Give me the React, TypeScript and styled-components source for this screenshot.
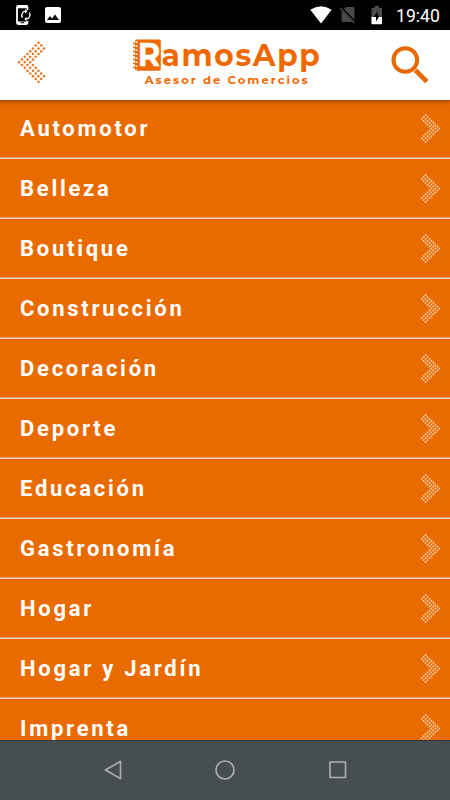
import React from 'react';
import styled, { createGlobalStyle } from 'styled-components';

const GlobalStyle = createGlobalStyle`
  body { margin: 0; background: #e96b00; }
  * { box-sizing: border-box; }
`;

const Screen = styled.div`
  width: 450px;
  height: 800px;
  display: flex;
  flex-direction: column;
  overflow: hidden;
  font-family: Roboto, sans-serif;
`;

const StatusBar = styled.div`
  height: 30px;
  flex: none;
  display: flex;
  align-items: center;
  justify-content: space-between;
  padding: 0 10px 0 15px;
  background: #000;
  color: #fff;
`;

const StatusGroup = styled.div`
  display: flex;
  align-items: center;
  height: 30px;
`;

const Icon = styled.svg<{ $gap?: number }>`
  display: block;
  flex: none;
  margin-left: ${({ $gap = 0 }) => $gap}px;
`;

const Clock = styled.span`
  margin-left: 13px;
  width: 44px;
  white-space: nowrap;
  font-size: 17.6px;
  line-height: 30px;
  padding-top: 2px;
`;

const Header = styled.header`
  height: 70px;
  flex: none;
  display: flex;
  align-items: flex-start;
  justify-content: space-between;
  padding: 0 20px 0 16px;
  background: #fff;
  z-index: 1;
  box-shadow: 0 1px 1px #bd4800, 0 2px 4px rgba(110, 45, 0, 0.55);
`;

const IconButton = styled.button<{ $top: number }>`
  margin: ${({ $top }) => $top}px 0 0;
  padding: 0;
  border: 0;
  background: none;
`;

const Logo = styled.svg`
  display: block;
  width: 196px;
  height: 60px;
  margin: 4px 0 0 15px;
  overflow: visible;
  fill: #f06800;
  font-family: 'Montserrat', 'Open Sans', sans-serif;
  font-weight: 700;
`;

const List = styled.ul`
  flex: 1;
  min-height: 0;
  overflow: hidden;
  margin: -1px 0 0;
  padding: 0;
  list-style: none;
  background: #e96b00;
`;

const Row = styled.li`
  height: 60px;
  display: flex;
  align-items: center;
  justify-content: space-between;
  padding: 0 9px 0 20px;
  border-bottom: 1px solid #f3d3bd;
  box-shadow: inset 0 -1px #eb9c5f;
  color: #fff;
`;

const RowLabel = styled.span`
  font-size: 22px;
  font-weight: 700;
  letter-spacing: 2.73px;
  line-height: 31px;
`;

const NavBar = styled.nav`
  height: 60px;
  flex: none;
  display: flex;
  align-items: center;
  justify-content: center;
  gap: 88.5px;
  padding-bottom: 2px;
  background: #464e52;
  border-top: 1px solid #353a3b;
`;

const lattice: [number, number][] = [];
for (let i = 0; i < 8; i++) {
  for (let j = 0; j < 8; j++) {
    if (i < 3 || j < 3) lattice.push([i, j]);
  }
}

type ChevronProps = {
  width: number; height: number; tipX: number; tipY: number;
  stepX: number; stepY: number; dot: number; color: string;
};

function DottedChevron({ width, height, tipX, tipY, stepX, stepY, dot, color }: ChevronProps) {
  return (
    <Icon width={width} height={height} fill={color} aria-hidden>
      {lattice.map(([i, j]) => (
        <circle key={`${i}-${j}`} cx={tipX + (i + j) * stepX} cy={tipY + (j - i) * stepY} r={dot} />
      ))}
    </Icon>
  );
}

const categories = [
  'Automotor', 'Belleza', 'Boutique', 'Construcción', 'Decoración', 'Deporte',
  'Educación', 'Gastronomía', 'Hogar', 'Hogar y Jardín', 'Imprenta',
];

export default function App() {
  return (
    <Screen>
      <GlobalStyle />
      <StatusBar>
        <StatusGroup>
          <Icon width="17" height="22" viewBox="0 0 17 22">
            <path d="M12.5 6V3.2Q12.5 2 11.3 2H3.2Q2 2 2 3.2V18.8Q2 20 3.2 20H11.3Q12.5 20 12.5 18.8V17" fill="none" stroke="#fff" strokeWidth="1.8" />
            <path d="M2 3H12.5M2 18.7H12.5" stroke="#fff" strokeWidth="2.6" />
            <path d="M5.5 18.7H9" stroke="#000" />
            <path d="M7.4 13.6A4.2 4.2 0 0 1 10.5 7.2M11.2 15.1A4.2 4.2 0 0 0 14.3 8.7" fill="none" stroke="#fff" strokeWidth="1.3" />
            <path d="M10 5L12.5 7.2L10 9.4ZM11.7 12.9L9.2 15.1L11.7 17.3Z" fill="#fff" />
          </Icon>
          <Icon $gap={13} width="16" height="16" viewBox="0 0 16 16">
            <path fill="#fff" fillRule="evenodd" d="M2 0H14Q16 0 16 2V14Q16 16 14 16H2Q0 16 0 14V2Q0 0 2 0ZM2 13H14L10 7.5L7 11.5L5 9Z" />
          </Icon>
        </StatusGroup>
        <StatusGroup>
          <Icon width="22" height="18" viewBox="0 0 22 18">
            <path d="M.3 3.8Q11-3.3 21.7 3.8L11 17.5Z" fill="#fff" />
          </Icon>
          <Icon $gap={8} width="17" height="18" viewBox="0 0 17 18">
            <path d="M6 1H13Q14.5 1 14.5 2.5V16H3Q1.5 16 1.5 14.5V6Z" fill="#484848" />
            <path d="M0 1L15.5 17" stroke="#000" strokeWidth="3" />
            <path d="M0 2L14.5 17" stroke="#555" strokeWidth="1.3" />
          </Icon>
          <Icon $gap={14} width="12" height="20" viewBox="0 0 12 20">
            <path d="M3.5 1H8V3H11V18Q11 19 10 19H1.5Q.5 19 .5 18V3H3.5Z" fill="#4c4c4c" />
            <path d="M.5 12H11V18.2Q11 19.2 10 19.2H1.5Q.5 19.2 .5 18.2Z" fill="#fff" />
            <path d="M7 5.5L2.8 12H5V16.5L8.8 10.5H6.5Z" fill="#000" />
          </Icon>
          <Clock>19:40</Clock>
        </StatusGroup>
      </StatusBar>
      <Header>
        <IconButton $top={10} aria-label="Volver">
          <DottedChevron width={32} height={46} tipX={3.2} tipY={22.3} stepX={2.75} stepY={2.78} dot={1.25} color="#ed731b" />
        </IconButton>
        <Logo viewBox="0 0 196 60">
          <path d="M8 5.5H30Q31.8 5.5 31.8 7.3V35Q31.8 36.8 30 36.8H8Q6 36.8 6 34.8V7.5Q6 5.5 8 5.5Z" />
          <path d="M4 9.5H9M4 13.5H9M4 17.5H9M4 21.5H9M4 25.5H9M4 29.5H9M4 33.5H9" stroke="#f06800" strokeWidth="1.3" />
          <path d="M7.5 7.5V36" stroke="#fff" strokeWidth="1.8" strokeDasharray="1.4 2.6" />
          <text x="8.7" y="32.3" fontSize="32.5" fill="#fff" stroke="#fff" strokeWidth=".4" textLength="22.6" lengthAdjust="spacingAndGlyphs">R</text>
          <text x="32.5" y="32" fontSize="31.5" textLength="160" lengthAdjust="spacingAndGlyphs" letterSpacing="1.8">amosApp</text>
          <text x="15.8" y="50" fontSize="11.5" textLength="165" letterSpacing="2.2">Asesor de Comercios</text>
        </Logo>
        <IconButton $top={15} aria-label="Buscar">
          <Icon width="40" height="40" fill="none" stroke="#e56800">
            <circle cx="15.3" cy="15" r="11.8" strokeWidth="4" />
            <path d="M25.4 25.2L36.9 36.6" strokeWidth="4.8" />
          </Icon>
        </IconButton>
      </Header>
      <List>
        {categories.map((name) => (
          <Row key={name}>
            <RowLabel>{name}</RowLabel>
            <DottedChevron width={22} height={30} tipX={20.3} tipY={14.5} stepX={-1.96} stepY={1.93} dot={0.95} color="#f9d6b9" />
          </Row>
        ))}
      </List>
      <NavBar>
        <Icon width="24" height="24" fill="none" stroke="#adb0b2" strokeWidth="1.6" strokeLinejoin="round">
          <path d="M19.5 3.4V20.6L4.3 12Z" />
        </Icon>
        <Icon width="24" height="24" fill="none" stroke="#adb0b2" strokeWidth="1.6">
          <circle cx="12" cy="12" r="9" />
        </Icon>
        <Icon width="24" height="24" fill="none" stroke="#adb0b2" strokeWidth="1.6" strokeLinejoin="round">
          <rect x="4" y="4" width="15.5" height="15.5" />
        </Icon>
      </NavBar>
    </Screen>
  );
}
